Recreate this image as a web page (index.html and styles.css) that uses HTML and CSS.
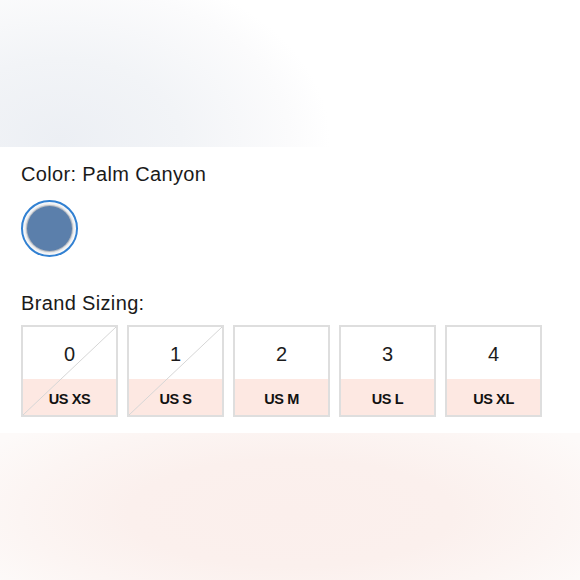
FILE: index.html
```html
<!DOCTYPE html>
<html>
<head>
<meta charset="utf-8">
<link rel="stylesheet" href="styles.css">
</head>
<body>
<div class="hero"></div>
<section class="options">
  <div class="label color-label">Color: Palm Canyon</div>
  <div class="swatches">
    <div class="swatch selected"><span class="dot"></span></div>
  </div>
  <div class="label size-label">Brand Sizing:</div>
  <div class="sizes">
    <div class="size disabled">
      <div class="num">0</div>
      <div class="us">US XS</div>
      <svg class="slash" viewBox="0 0 100 100" preserveAspectRatio="none"><line x1="0" y1="100" x2="100" y2="0"/></svg>
    </div>
    <div class="size disabled">
      <div class="num">1</div>
      <div class="us">US S</div>
      <svg class="slash" viewBox="0 0 100 100" preserveAspectRatio="none"><line x1="0" y1="100" x2="100" y2="0"/></svg>
    </div>
    <div class="size">
      <div class="num">2</div>
      <div class="us">US M</div>
    </div>
    <div class="size">
      <div class="num">3</div>
      <div class="us">US L</div>
    </div>
    <div class="size">
      <div class="num">4</div>
      <div class="us">US XL</div>
    </div>
  </div>
</section>
<div class="footer-glow"></div>
</body>
</html>
```
FILE: styles.css
```css
html, body {
  margin: 0;
  padding: 0;
  background: #fff;
}
body {
  width: 580px;
  height: 580px;
  overflow: hidden;
  font-family: "Liberation Sans", Arial, sans-serif;
  color: #1a1a1a;
}
.hero {
  height: 147px;
  background: radial-gradient(ellipse 270px 180px at 60px 140px, #eceff4 0%, #f2f4f7 45%, #fbfbfc 85%, #ffffff 100%);
}
.options {
  padding: 15px 21px 0 21px;
  height: 271px;
}
.label {
  font-size: 20px;
  line-height: 24px;
  letter-spacing: 0.35px;
}
.swatches {
  display: flex;
  margin-top: 14px;
}
.swatch {
  width: 57px;
  height: 57px;
  box-sizing: border-box;
  border-radius: 50%;
  border: 2px solid #2f7fd2;
  display: flex;
  align-items: center;
  justify-content: center;
}
.dot {
  width: 45px;
  height: 45px;
  border-radius: 50%;
  background: #5b7fab;
  box-shadow: 0 0 0 1px #b4b9c0, 0 0 3px 2px #d6d9de;
}
.size-label {
  margin-top: 34px;
}
.sizes {
  display: flex;
  gap: 9px;
  margin-top: 10px;
}
.size {
  position: relative;
  width: 97px;
  height: 92px;
  box-sizing: border-box;
  border: 2px solid #dedede;
  display: flex;
  flex-direction: column;
}
.num {
  flex: 1;
  display: flex;
  align-items: center;
  justify-content: center;
  font-size: 20px;
  font-weight: 300;
  color: #1c1c1c;
  padding-top: 3px;
}
.us {
  height: 36px;
  background: #fde8e2;
  display: flex;
  align-items: center;
  justify-content: center;
  font-size: 14.5px;
  font-weight: 700;
  letter-spacing: -0.4px;
  color: #111;
  padding-top: 3px;
  box-sizing: border-box;
}
.slash {
  position: absolute;
  inset: 0;
  width: 100%;
  height: 100%;
}
.slash line {
  stroke: #d6d6d6;
  stroke-width: 1;
  vector-effect: non-scaling-stroke;
}
.footer-glow {
  height: 147px;
  background: radial-gradient(ellipse 360px 120px at 290px 80px, #fbefec 0%, #fbf0ed 45%, #fcf5f3 75%, #fdfaf9 100%);
}
```
